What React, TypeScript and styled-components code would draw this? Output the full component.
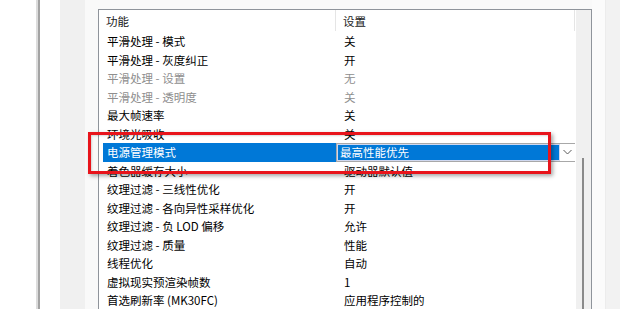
import React from "react";
import styled, { createGlobalStyle } from "styled-components";

const Global = createGlobalStyle`
  html, body { margin: 0; padding: 0; background: #ffffff; }
  body { font-family: "Noto Sans CJK SC", "Microsoft YaHei", sans-serif; }
  #root { width: 620px; height: 309px; overflow: hidden; }
`;

const Page = styled.div`
  position: relative;
  display: flex;
  width: 620px;
  height: 309px;
  overflow: hidden;
  background: #ffffff;
`;

const Blank = styled.div<{ $w: number; $bg: string }>`
  flex: 0 0 ${(p) => p.$w}px;
  background: ${(p) => p.$bg};
`;

const Splitter = styled.div`
  flex: 0 0 4px;
  box-sizing: border-box;
  border-left: 2px solid #dcdcdc;
  border-right: 2px solid #a3a3a3;
`;

const Panel = styled.div`
  flex: 1;
  display: flex;
  align-items: flex-start;
  padding: 9px 0 0 13px;
  background: #f9f9f9;
`;

const ListBox = styled.div`
  flex: 0 0 494px;
  box-sizing: border-box;
  height: 340px;
  border: 1px solid #8f949b;
  background: #ffffff;
  display: flex;
`;

const Content = styled.div`
  flex: 1;
  padding-left: 4px;
  display: flex;
  flex-direction: column;
`;

const Header = styled.div`
  display: grid;
  grid-template-columns: 233px 239px;
  height: 22px;
  margin-left: -4px;
  padding-left: 4px;
`;

const HeadCell = styled.div<{ $pad: number }>`
  display: flex;
  align-items: center;
  padding-left: ${(p) => p.$pad}px;
  font-size: 11.5px;
  color: #1a1a1a;
  border-right: 1px solid #e5e5e5;
  height: 21px;
`;

const Row = styled.div<{ $selected?: boolean }>`
  display: grid;
  grid-template-columns: 233px 239px;
  height: 18.5px;
  font-size: 11.5px;
  line-height: 18.5px;
`;

const NameCell = styled.div<{ $selected?: boolean; $disabled?: boolean }>`
  padding-left: 4px;
  white-space: nowrap;
  background: ${(p) => (p.$selected ? "#0078d7" : "transparent")};
  color: ${(p) => (p.$selected ? "#ffffff" : p.$disabled ? "#8e8e8e" : "#000000")};
`;

const ValueCell = styled.div<{ $disabled?: boolean }>`
  padding-left: 8px;
  white-space: nowrap;
  color: ${(p) => (p.$disabled ? "#8e8e8e" : "#000000")};
`;

const Combo = styled.div`
  display: flex;
  box-sizing: border-box;
  height: 18.5px;
  border: 1px solid #a8a8a8;
  border-right: none;
  background: #ffffff;
  padding: 1px 0 1px 1px;
`;

const ComboField = styled.div`
  flex: 0 0 221px;
  box-sizing: border-box;
  background: #0078d7;
  color: #ffffff;
  line-height: 14px;
  font-size: 11.5px;
  padding-left: 2px;
  outline: 1px solid #cfd8f0;
`;

const ComboButton = styled.div`
  flex: 1;
  display: flex;
  align-items: center;
  justify-content: center;
`;

const Scrollbar = styled.div`
  position: relative;
  flex: 0 0 15px;
  background: #f0f0f0;
`;

const Thumb = styled.div`
  position: absolute;
  left: 6px;
  top: 148px;
  width: 2px;
  bottom: 0;
  background: #8a8a8a;
`;

const RightGap = styled.div`
  flex: 0 0 13px;
  align-self: stretch;
  margin-top: -9px;
  background: #fbfbfb;
`;

const RightEdge = styled.div`
  flex: 1;
  align-self: stretch;
  margin-top: -9px;
  background: #f2f2f2;
  border-left: 1px solid #ececec;
`;

const Annotation = styled.div`
  position: absolute;
  left: 88px;
  top: 132px;
  width: 463px;
  height: 42px;
  box-sizing: border-box;
  border: 3px solid #e8141b;
  box-shadow: 2px 2px 4px rgba(0, 0, 0, 0.35), inset 1px 1px 2px rgba(0, 0, 0, 0.15);
  pointer-events: none;
`;

type Item = { name: string; value: string; disabled?: boolean; selected?: boolean };

const rows: Item[] = [
  { name: "平滑处理 - 模式", value: "关" },
  { name: "平滑处理 - 灰度纠正", value: "开" },
  { name: "平滑处理 - 设置", value: "无", disabled: true },
  { name: "平滑处理 - 透明度", value: "关", disabled: true },
  { name: "最大帧速率", value: "关" },
  { name: "环境光吸收", value: "关" },
  { name: "电源管理模式", value: "最高性能优先", selected: true },
  { name: "着色器缓存大小", value: "驱动器默认值" },
  { name: "纹理过滤 - 三线性优化", value: "开" },
  { name: "纹理过滤 - 各向异性采样优化", value: "开" },
  { name: "纹理过滤 - 负 LOD 偏移", value: "允许" },
  { name: "纹理过滤 - 质量", value: "性能" },
  { name: "线程优化", value: "自动" },
  { name: "虚拟现实预渲染帧数", value: "1" },
  { name: "首选刷新率 (MK30FC)", value: "应用程序控制的" },
];

const Chevron = () => (
  <svg width="9" height="6" viewBox="0 0 9 6">
    <polyline points="0.5,1 4.5,5 8.5,1" fill="none" stroke="#5a5a5a" strokeWidth="1" />
  </svg>
);

export default function App() {
  return (
    <Page>
      <Global />
      <Blank $w={36} $bg="#ffffff" />
      <Splitter />
      <Blank $w={20} $bg="#ffffff" />
      <Blank $w={25} $bg="#f0f0f0" />
      <Panel>
        <ListBox>
          <Content>
            <Header>
              <HeadCell $pad={3}>功能</HeadCell>
              <HeadCell $pad={7}>设置</HeadCell>
            </Header>
            {rows.map((r) => (
              <Row key={r.name}>
                <NameCell $selected={r.selected} $disabled={r.disabled}>
                  {r.name}
                </NameCell>
                {r.selected ? (
                  <Combo>
                    <ComboField>{r.value}</ComboField>
                    <ComboButton>
                      <Chevron />
                    </ComboButton>
                  </Combo>
                ) : (
                  <ValueCell $disabled={r.disabled}>{r.value}</ValueCell>
                )}
              </Row>
            ))}
          </Content>
          <Scrollbar>
            <Thumb />
          </Scrollbar>
        </ListBox>
        <RightGap />
        <RightEdge />
      </Panel>
      <Annotation />
    </Page>
  );
}
